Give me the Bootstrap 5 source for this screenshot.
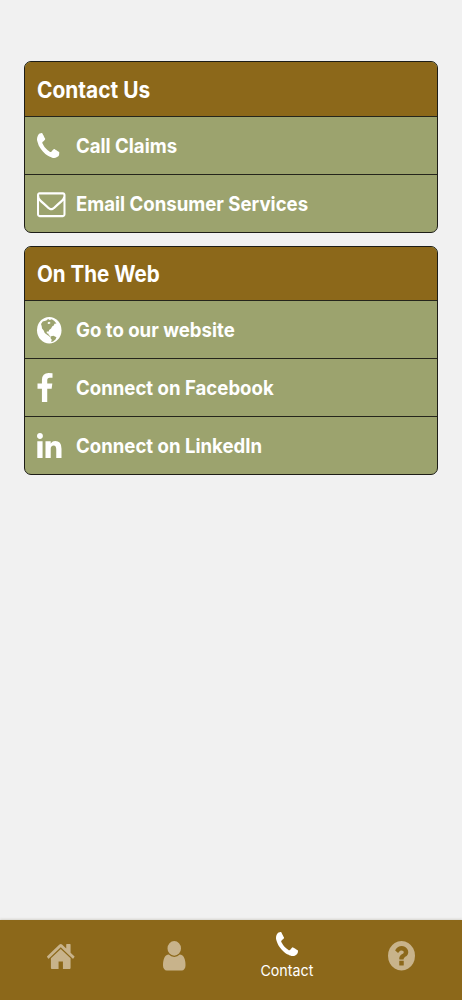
<!DOCTYPE html>
<html lang="en">
<head>
<meta charset="utf-8">
<meta name="viewport" content="width=device-width, initial-scale=1">
<title>Contact</title>
<link href="https://cdn.jsdelivr.net/npm/bootstrap@5.3.0/dist/css/bootstrap.min.css" rel="stylesheet">
<style>
  body { background: #f1f1f1; font-family: Inter, "Liberation Sans", sans-serif; height: 1000px; overflow: hidden; }
  main { padding: 61px 24px 0; }
  .panel { border: 1.5px solid #1d1d17; border-radius: 7px; background: #9ca36e; overflow: hidden; color: #fff; display: grid; font-weight: 650; }
  .panel-contact { grid-template-rows: 55px 58px 57px; height: 172px; margin-bottom: 13px; }
  .panel-web { grid-template-rows: 54px 58px 58px 57px; height: 229px; }
  .panel > * { padding-left: 12px; color: #fff; text-decoration: none; border-bottom: 1px solid #25251c; }
  .panel > :last-child { border-bottom: 0; }
  .panel h2 { margin: 0; background: #8c681a; font-size: 22.5px; font-weight: 650; line-height: 1; padding-top: 2px; }
  .glyph { width: 39px; flex: none; display: flex; }
  .squeeze { display: inline-block; transform: scaleX(.93); transform-origin: left center; white-space: nowrap; }
  .panel-web h2 .squeeze { transform: scaleX(.915); }
  .panel a { font-size: 20px; line-height: 1; }
  svg { fill: currentColor; display: block; }
  .tabs { height: 80px; background: #8c681a; color: #c8b38b; box-shadow: 0 -1px 2px #d5d3cd; padding: 0 4px; }
  .tabs a { color: inherit; text-decoration: none; width: 113.5px; padding-bottom: 8px; }
  .tabs a.active { color: #fff; font-size: 15px; line-height: 18px; padding: 12px 1px 0 0; }
  .tabs .squeeze { transform-origin: center; margin-top: 6px; transform: scaleX(.95); }
</style>
<script src="https://cdn.jsdelivr.net/npm/bootstrap@5.3.0/dist/js/bootstrap.bundle.min.js"></script>
</head>
<body class="d-flex flex-column">
<svg width="0" height="0" class="position-absolute" aria-hidden="true">
  <symbol id="phone" viewBox="192 128 1408 1408" preserveAspectRatio="none"><path d="M1600 1240q0 27-10 70.5t-21 68.5q-21 50-122 106-94 51-186 51-27 0-53-3.5t-57-12.5-47-14.5-55.5-20.5-49.5-18q-98-35-175-83-127-79-264-216t-216-264q-48-77-83-175-3-9-18-49.5t-20.5-55.5-14.5-47-12.5-57-3.5-53q0-92 51-186 56-101 106-122 25-11 68.5-21t70.5-10q14 0 21 3 18 6 53 76 11 19 30 54t35 63.5 31 53.5q3 4 17.5 25t21.5 35.5 7 28.5q0 20-28.5 50t-62 55-62 53-28.5 46q0 9 5 22.5t8.5 20.5 14 24 11.5 19q76 137 174 235t235 174q2 1 19 11.5t24 14 20.5 8.5 22.5 5q18 0 46-28.5t53-62 55-62 50-28.5q14 0 28.5 7t35.5 21.5 25 17.5q25 15 53.5 31t63.5 35 54 30q70 35 76 53 3 7 3 21z"/></symbol>
</svg>
<main class="flex-grow-1">
  <section class="panel panel-contact">
    <h2 class="d-flex align-items-center"><span class="squeeze">Contact Us</span></h2>
    <a href="#" class="d-flex align-items-center"><span class="glyph"><svg width="22.5" height="25"><use href="#phone"/></svg></span><span class="squeeze">Call Claims</span></a>
    <a href="#" class="d-flex align-items-center"><span class="glyph pt-1"><svg width="28.5" height="25" viewBox="0 360 1792 1408" preserveAspectRatio="none" overflow="visible"><path transform="translate(0 58)" d="M1664 1504v-768q-32 36-69 66-268 206-426 338-51 43-83 67t-86.5 48.5-102.5 24.5h-2q-48 0-102.5-24.5t-86.5-48.5-83-67q-158-132-426-338-37-30-69-66v768q0 13 9.5 22.5t22.5 9.5h1472q13 0 22.5-9.5t9.5-22.5zm0-1051v-24.5l-.5-13-3-12.5-5.5-9-9-7.5-14-2.5h-1472q-13 0-22.5 9.5t-9.5 22.5q0 168 147 284 193 152 401 317 6 5 35 29.5t46 37.5 44.5 31.5 50.5 27.5 43 9h2q20 0 43-9t50.5-27.5 44.5-31.5 46-37.5 35-29.5q208-165 401-317 54-43 100.5-115.5t46.5-131.5zm128-37v1088q0 66-47 113t-113 47h-1472q-66 0-113-47t-47-113v-1088q0-66 47-113t113-47h1472q66 0 113 47t47 113z"/></svg></span><span class="squeeze">Email Consumer Services</span></a>
  </section>
  <section class="panel panel-web">
    <h2 class="d-flex align-items-center"><span class="squeeze">On The Web</span></h2>
    <a href="#" class="d-flex align-items-center"><span class="glyph pt-1"><svg width="24.5" height="26.5" viewBox="0 3 73 78" preserveAspectRatio="none" overflow="visible"><ellipse cx="36.5" cy="39" rx="36.5" ry="39"/><path fill="#9ca36e" d="M12 21L17 13L28 10L33 6L38 9L44 7L51 11L58 19L52 20L50 25L45 28L42 34L36 38L35 43L29 43L29 48L34 49L35 54L41 57L38 58L31 53L23 47L20 40L15 34L14 27ZM42 57L49 55L58 60L55 66L48 72L42 74L44 67L40 62Z"/><path d="M32 16L36 14L41 18L36 21L32 20Z"/></svg></span><span class="squeeze">Go to our website</span></a>
    <a href="#" class="d-flex align-items-center"><span class="glyph"><svg width="15.5" height="29" viewBox="450 0 893 1664" preserveAspectRatio="none"><path d="M1343 12v264h-157q-86 0-116 36t-30 108v189h293l-39 296h-254v759h-306v-759h-255v-296h255v-218q0-186 104-288.5t277-102.5q147 0 228 12z"/></svg></span><span class="squeeze">Connect on Facebook</span></a>
    <a href="#" class="d-flex align-items-center"><span class="glyph"><svg width="24.5" height="25.5" viewBox="128 148 1536 1468" preserveAspectRatio="none"><path d="M477 625v991h-330v-991h330zm21-306q1 73-50.5 122t-135.5 49h-2q-82 0-132-49t-50-122q0-74 51.5-122.5t134.5-48.5 133 48.5 51 122.5zm1166 729v568h-329v-530q0-105-40.5-164.5t-126.5-59.5q-63 0-105.5 34.5t-63.5 85.5q-11 30-11 81v553h-329q2-399 2-647t-1-296l-1-48h329v144h-2q20-32 41-56t56.5-52 87-43.5 114.5-15.5q171 0 275 113.5t104 332.5z"/></svg></span><span class="squeeze">Connect on LinkedIn</span></a>
  </section>
</main>
<nav class="tabs d-flex">
  <a href="#" aria-label="Home" class="d-flex align-items-center justify-content-center"><svg width="27.5" height="25" viewBox="91 253 1610 1283" preserveAspectRatio="none"><path d="M1472 992v480q0 26-19 45t-45 19h-384v-384h-256v384h-384q-26 0-45-19t-19-45v-480q0-1 .5-3t.5-3l575-474 575 474q1 2 1 6zm223-69l-62 74q-8 9-21 11h-3q-13 0-21-7l-692-577-692 577q-12 8-24 7-13-2-21-11l-62-74q-8-10-7-23.5t11-21.5l719-599q32-26 76-26t76 26l244 204v-195q0-14 9-23t23-9h192q14 0 23 9t9 23v408l219 182q10 8 11 21.5t-7 23.5z"/></svg></a>
  <a href="#" aria-label="Profile" class="d-flex align-items-center justify-content-center"><svg width="22.5" height="29.5" viewBox="256 128 1280 1536" preserveAspectRatio="none"><path d="M1536 1399q0 109-62.5 187t-150.5 78h-854q-88 0-150.5-78t-62.5-187q0-85 8.5-160.5t31.5-152 58.5-131 94-89 134.5-34.5q131 128 313 128t313-128q76 0 134.5 34.5t94 89 58.5 131 31.5 152 8.5 160.5zm-256-887q0 159-112.5 271.5t-271.5 112.5-271.5-112.5-112.5-271.5 112.5-271.5 271.5-112.5 271.5 112.5 112.5 271.5z"/></svg></a>
  <a href="#" class="active d-flex flex-column align-items-center"><svg width="22" height="24"><use href="#phone"/></svg><span class="squeeze">Contact</span></a>
  <a href="#" aria-label="Help" class="d-flex align-items-center justify-content-center"><svg width="27" height="29.5" viewBox="128 128 1536 1536" preserveAspectRatio="none"><path d="M1024 1376v-192q0-14-9-23t-23-9h-192q-14 0-23 9t-9 23v192q0 14 9 23t23 9h192q14 0 23-9t9-23zm256-672q0-88-55.5-163t-138.5-116-170-41q-243 0-371 213-15 24 8 42l132 100q7 6 19 6 16 0 25-12 53-68 86-92 34-24 86-24 48 0 85.5 26t37.5 59q0 38-20 61t-68 45q-63 28-115.5 86.5t-52.5 125.5v36q0 14 9 23t23 9h192q14 0 23-9t9-23q0-19 21.5-49.5t54.5-49.5q32-18 49-28.5t46-35 44.5-48 28-60.5 12.5-81zm384 192q0 209-103 385.5t-279.5 279.5-385.5 103-385.5-103-279.5-279.5-103-385.5 103-385.5 279.5-279.5 385.5-103 385.5 103 279.5 279.5 103 385.5z"/></svg></a>
</nav>
</body>
</html>
